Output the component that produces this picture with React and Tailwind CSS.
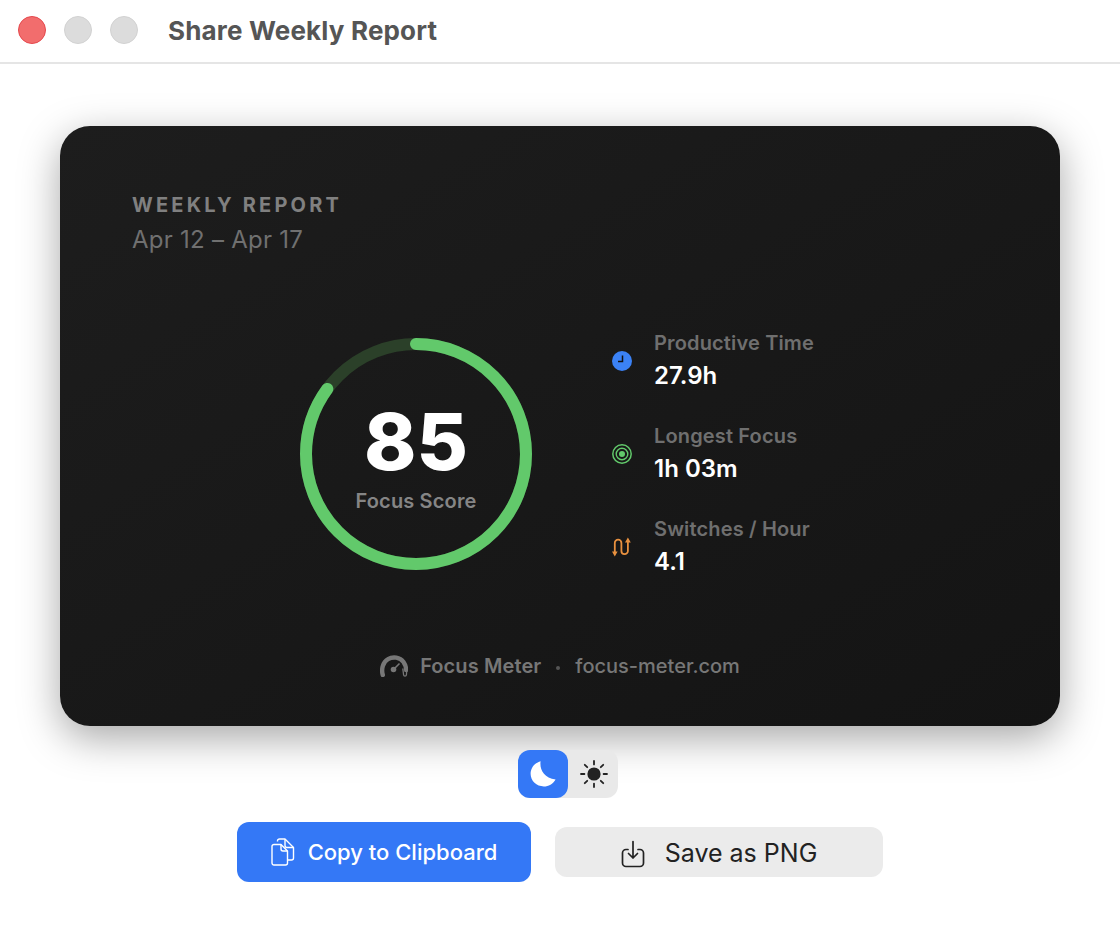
import React from "react";

const F = "font-['Inter',sans-serif]";

function ClockIcon() {
  return (
    <svg width="20" height="20" viewBox="0 0 20 20">
      <circle cx="10" cy="10" r="10" fill="#3b82f6" />
      <path d="M10.500 4.500V10.500H6" fill="none" stroke="#111" strokeWidth="1.500" />
    </svg>
  );
}
function TargetIcon() {
  return (
    <svg width="20" height="20" viewBox="0 0 20 20" fill="none">
      <circle cx="10" cy="10" r="9.200" stroke="#62c96b" strokeWidth="1.500" />
      <circle cx="10" cy="10" r="5.800" stroke="#62c96b" strokeWidth="1.400" />
      <circle cx="10" cy="10" r="3" fill="#62c96b" />
    </svg>
  );
}
function SwitchIcon() {
  return (
    <svg width="20" height="20" viewBox="0 0 20 20" fill="none">
      <path d="M2.800 15V6a3.300 3.300 0 0 1 3.300-3.300h0a3.300 3.300 0 0 1 3.300 3.300v8a3.200 3.200 0 0 0 3.200 3.200h0a3.300 3.300 0 0 0 3.300-3.300V4.500" stroke="#e9913f" strokeWidth="1.800" />
      <path d="M0 14.500h5.600L2.800 19.400zM13 5.500h5.800L15.900 .6z" fill="#e9913f" />
    </svg>
  );
}
function GaugeIcon() {
  return (
    <svg width="28" height="22" viewBox="0 0 28 22" fill="none">
      <path d="M2.800 20C1 14 3 7 8 4.200c5-3 12-2 15.500 2.800 1.800 2.600 2.600 5.500 2.600 8" stroke="#777" strokeWidth="4.400" strokeLinecap="round" />
      <circle cx="13.500" cy="14.500" r="2.800" fill="#777" />
      <path d="M14 14l5.500-5.500" stroke="#777" strokeWidth="1.600" />
      <path d="M22.800 13.500l.8 6.500c.2 1.400 2.600 1.400 2.800 0l.4-5" stroke="#777" strokeWidth="1.300" />
    </svg>
  );
}
function MoonIcon() {
  return (
    <svg width="28" height="28" viewBox="0 0 28 28">
      <path d="M11.600 1.200C10.400 8.800 14.600 18 26.600 19.400 24 24 19.600 26.400 14.800 26.400 7.600 26.400 1.600 21 1.600 13.800 1.600 8 5.600 2.800 11.600 1.200Z" fill="#fff" />
    </svg>
  );
}
function SunIcon() {
  return (
    <svg width="28" height="28" viewBox="0 0 28 28" fill="none">
      <circle cx="14" cy="14" r="6.600" fill="#222" />
      <g stroke="#222" strokeWidth="1.800" strokeLinecap="round">
        <path d="M14 1v3.400M14 23.600V27M1 14h3.400M23.600 14H27M4.800 4.800l2.400 2.400M20.800 20.800l2.400 2.400M4.800 23.200l2.400-2.400M20.800 7.200l2.400-2.400" />
      </g>
    </svg>
  );
}
function CopyIcon() {
  return (
    <svg width="24" height="28" viewBox="0 0 24 28" fill="none" stroke="#fff" strokeWidth="1.400" strokeLinejoin="round">
      <path d="M6.500 3.500V3a2 2 0 0 1 2-2h5.500l8.500 8.500V20a2 2 0 0 1-2 2H17" />
      <path d="M14 1v6.500a2 2 0 0 0 2 2h6.500" />
      <path d="M3 6.500h7l6.500 6.500v12a2 2 0 0 1-2 2H3a2 2 0 0 1-2-2V8.500a2 2 0 0 1 2-2Z" />
      <path d="M10 6.500V11a2 2 0 0 0 2 2h4.500" />
    </svg>
  );
}
function SaveIcon() {
  return (
    <svg width="24" height="28" viewBox="0 0 24 28" fill="none" stroke="#222" strokeWidth="1.700" strokeLinecap="round" strokeLinejoin="round">
      <path d="M7 9.500H5a3.500 3.500 0 0 0-3.500 3.500v10A3.500 3.500 0 0 0 5 26.500h14a3.500 3.500 0 0 0 3.500-3.500V13A3.500 3.500 0 0 0 19 9.500h-2" />
      <path d="M12 1.500V18M7.500 13.500 12 18l4.500-4.500" />
    </svg>
  );
}

function Stat({ icon, label, value }) {
  return (
    <div className="flex items-center h-[57px]">
      <div className="w-5 h-5 shrink-0 mr-[22px] flex">{icon}</div>
      <div className="flex flex-col">
        <div className="text-[20px] leading-[28px] font-semibold tracking-[0.15px] text-[#6f6f6f]">{label}</div>
        <div className="text-[24px] leading-[32px] font-semibold text-white mt-[3px]">{value}</div>
      </div>
    </div>
  );
}

export default function App() {
  const r = 110;
  const c = 2 * Math.PI * r;
  return (
    <div className={`${F} w-[1120px] h-[944px] bg-white flex flex-col overflow-hidden`}>
      <header className="h-[64px] shrink-0 border-b-2 border-[#e5e5e5] flex items-center pl-[18px] pb-[2px]">
        <div className="w-[28px] h-[28px] rounded-full bg-[#f26d6d] border border-[#e5484d]" />
        <div className="w-[28px] h-[28px] rounded-full bg-[#dcdcdc] border border-[#d2d2d2] ml-[18px]" />
        <div className="w-[28px] h-[28px] rounded-full bg-[#dcdcdc] border border-[#d2d2d2] ml-[18px]" />
        <div className="ml-[30px] text-[26px] font-bold tracking-[0.17px] text-[#555555]">Share Weekly Report</div>
      </header>

      <main className="flex flex-col items-center pt-[62px]">
        <section className="w-[1000px] h-[600px] rounded-[30px] bg-gradient-to-br from-[#1d1d1d] to-[#141414] shadow-[0_12px_40px_rgba(0,0,0,0.35)] flex flex-col pt-[66px] px-[72px]">
          <div className="text-[20px] leading-[26px] font-bold tracking-[3.2px] text-[#808080]">WEEKLY REPORT</div>
          <div className="text-[24px] leading-[32px] tracking-[0.25px] text-[#707070] mt-[6px]">Apr 12 – Apr 17</div>

          <div className="flex items-center mt-[76px] ml-[168px]">
            <div className="relative w-[232px] h-[232px] shrink-0 mr-[80px]">
              <svg width="232" height="232" viewBox="0 0 232 232" fill="none">
                <circle cx="116" cy="116" r={r} stroke="#2b4029" strokeWidth="12" />
                <circle cx="116" cy="116" r={r} stroke="#62c96b" strokeWidth="12" strokeLinecap="round"
                  strokeDasharray={`${c * 0.85} ${c}`} transform="rotate(-90 116 116)" />
              </svg>
              <div className="absolute inset-0 flex flex-col items-center pt-[55px]">
                <div className="text-[79px] leading-[96px] font-extrabold text-white">85</div>
                <div className="text-[20px] leading-[28px] font-semibold tracking-[0.15px] text-[#858585] -mt-[2px]">Focus Score</div>
              </div>
            </div>
            <div className="flex flex-col gap-[36px]">
              <Stat icon={<ClockIcon />} label="Productive Time" value="27.9h" />
              <Stat icon={<TargetIcon />} label="Longest Focus" value="1h 03m" />
              <Stat icon={<SwitchIcon />} label="Switches / Hour" value="4.1" />
            </div>
          </div>

          <div className="flex items-center justify-center mt-[77px] text-[20px] leading-[28px] font-medium text-[#777777]">
            <GaugeIcon />
            <span className="ml-[12px] font-semibold tracking-[0.1px]">Focus Meter</span>
            <span className="w-[4px] h-[4px] rounded-full bg-[#555] mx-[15px] mt-[3px]" />
            <span>focus-meter.com</span>
          </div>
        </section>

        <div className="mt-[24px] ml-[16px] w-[100px] h-[48px] rounded-[12px] bg-[#e9e9e9] flex">
          <div className="w-[50px] h-[48px] rounded-[12px] bg-[#3478f6] flex items-center justify-center"><MoonIcon /></div>
          <div className="w-[50px] h-[48px] pl-[2px] flex items-center justify-center"><SunIcon /></div>
        </div>

        <div className="mt-[24px] flex items-center gap-[24px]">
          <button className="w-[294px] h-[60px] rounded-[12px] bg-[#3478f6] text-white flex items-center justify-center gap-[13px] text-[22px] font-medium">
            <CopyIcon />Copy to Clipboard
          </button>
          <button className="w-[328px] h-[50px] rounded-[12px] bg-[#ebebeb] text-[#222222] flex items-center justify-center gap-[20px] text-[25px] pt-[3px]">
            <SaveIcon />Save as PNG
          </button>
        </div>
      </main>
    </div>
  );
}
